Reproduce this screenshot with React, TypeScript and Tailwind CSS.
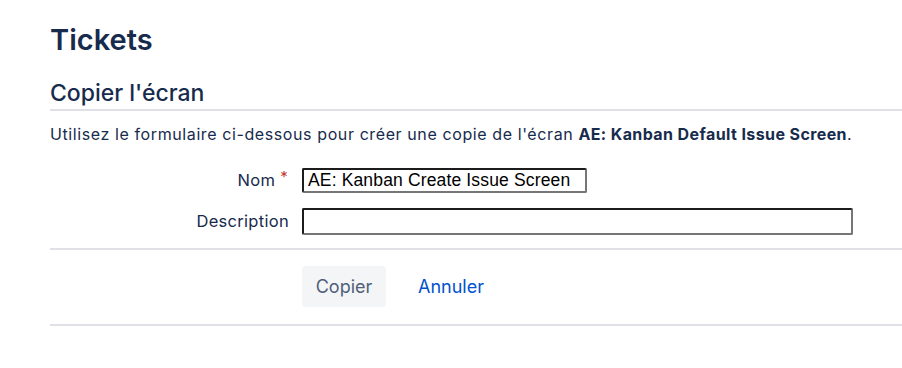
import React from "react";

export default function App() {
  return (
    <div className="w-[902px] h-[368px] bg-white text-[#172b4d] overflow-hidden" style={{ fontFamily: "Inter, 'Liberation Sans', sans-serif" }}>
      <div className="pl-[50px] pt-[23px]">
        <h1 className="text-[29px] leading-[34px] font-semibold">Tickets</h1>
        <h2 className="mt-[22px] text-[23px] leading-[28px] font-medium pb-[2px] border-b-2 border-[#dfe1e6]">Copier l'écran</h2>
        <p className="mt-[13px] text-[16px] leading-[20px] tracking-[0.6px]">
          Utilisez le formulaire ci-dessous pour créer une copie de l'écran <b className="font-bold tracking-[0.4px]">AE: Kanban Default Issue Screen</b>.
        </p>
        <div className="mt-[24px] flex flex-col gap-[15px]">
          <div className="flex items-center">
            <label className="w-[252px] text-right text-[16.5px] tracking-[0.3px] pr-[14px]">
              <span>Nom</span>
              <span className="text-[#c9372c] ml-[5px] text-[15px] relative top-[-4px]">*</span>
            </label>
            <input
              readOnly
              value="AE: Kanban Create Issue Screen"
              className="w-[285px] h-[25px] px-[4px] text-[17.5px] tracking-[0.15px] text-black bg-white border-2 border-t-[#1c1c1c] border-l-[#1c1c1c] border-r-[#767676] border-b-[#767676] rounded-[2px] outline-none"
              style={{ fontFamily: "'Liberation Sans', Arial, sans-serif" }}
            />
          </div>
          <div className="flex items-center">
            <label className="w-[252px] text-right text-[16.5px] tracking-[0.3px] pr-[13px]">Description</label>
            <input
              readOnly
              value=""
              className="w-[551px] h-[27px] px-[5px] text-[16px] text-black bg-white border-2 border-t-[#1c1c1c] border-l-[#1c1c1c] border-r-[#767676] border-b-[#767676] rounded-[2px] outline-none"
            />
          </div>
        </div>
        <div className="mt-[13px] border-t-2 border-[#dfe1e6]" />
        <div className="flex items-center pl-[252px] pt-[16px] pb-[17px] gap-[32px]">
          <button className="h-[41px] w-[84px] rounded-[4px] bg-[#f4f5f7] text-[#505f79] text-[18px]">Copier</button>
          <a className="text-[#0052cc] text-[18px]">Annuler</a>
        </div>
        <div className="border-t-2 border-[#dfe1e6]" />
      </div>
    </div>
  );
}
